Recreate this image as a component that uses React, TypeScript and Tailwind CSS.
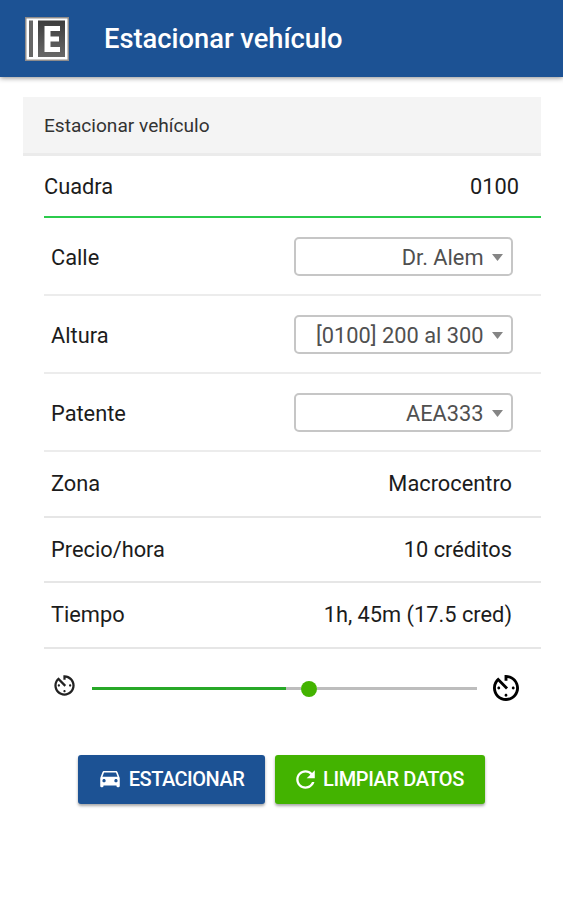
import React from "react";
import { IoMdTimer, IoMdCar, IoMdRefresh } from "react-icons/io";

function Logo() {
  return (
    <svg width="44" height="44" viewBox="0 0 44 44" className="shrink-0">
      <defs>
        <linearGradient id="plate" x1="0" y1="0" x2="0" y2="1">
          <stop offset="0" stopColor="#3c3c3c" />
          <stop offset="1" stopColor="#686868" />
        </linearGradient>
      </defs>
      <rect width="44" height="44" fill="#8f8c8b" />
      <rect x="1.5" y="1.5" width="41" height="41" fill="#fff" />
      <rect x="4" y="3.5" width="4" height="36.500" fill="#666" />
      <rect x="13" y="3.5" width="27" height="36.500" fill="url(#plate)" />
      <path d="M19.500 9H35v5H25.500v5.500H34v5h-8.500V30H35v5H19.500z" fill="#fff" />
    </svg>
  );
}

function SelectRow({ label, value }: { label: string; value: string }) {
  return (
    <div className="flex h-[78px] items-center justify-between border-b-2 border-[#ececec] pt-px pr-[28.500px] pl-[7px]">
      <span className="pt-[3px]">{label}</span>
      <div className="flex h-[39px] w-[219px] items-center justify-end rounded-[5px] border-2 border-[#c6c6c6] pr-2 text-[#505050]">
        <span className="pt-[3px]">{value}</span>
        <svg width="11" height="7" viewBox="0 0 11 7" className="mt-px ml-2">
          <path d="M0 0h11L5.500 7z" fill="#858585" />
        </svg>
      </div>
    </div>
  );
}

function InfoRow({ label, value }: { label: string; value: string }) {
  return (
    <div className="flex h-[65.500px] items-center justify-between border-b-2 border-[#e6e6e6] pt-0.5 pr-[29px] pl-[7px]">
      <span>{label}</span>
      <span>{value}</span>
    </div>
  );
}

export default function App() {
  return (
    <div className="h-[900px] w-full overflow-hidden bg-white font-[Roboto,sans-serif] text-[21.800px] text-[#1c1c1c]">
      <header className="flex h-[77px] items-center bg-[#1c5294] pl-[25px] shadow-[0_1px_5px_rgba(0,0,0,0.45)]">
        <Logo />
        <h1 className="mt-0.5 ml-[35px] text-[27.300px] font-medium text-white">Estacionar vehículo</h1>
      </header>
      <main className="mt-5 mr-[22px] ml-[23px]">
        <div className="flex h-[59px] items-center border-b-3 border-[#ebebeb] bg-[#f4f4f4] pt-0.5 pl-[21px] text-[19.100px] text-[#333]">
          Estacionar vehículo
        </div>
        <div className="ml-[21px]">
          <div className="flex h-[62px] items-center justify-between border-b-2 border-[#2bcb4c] pt-0.5 pr-[22px]">
            <span>Cuadra</span>
            <span>0100</span>
          </div>
          <SelectRow label="Calle" value="Dr. Alem" />
          <SelectRow label="Altura" value="[0100] 200 al 300" />
          <SelectRow label="Patente" value="AEA333" />
          <InfoRow label="Zona" value="Macrocentro" />
          <InfoRow label="Precio/hora" value="10 créditos" />
          <InfoRow label="Tiempo" value="1h, 45m (17.5 cred)" />
        </div>
        <div className="mt-[25px] flex h-[28px] items-center pl-[29px]">
          <IoMdTimer className="mb-1 size-[25px] shrink-0 text-[#222]" />
          <div className="mt-0.5 ml-[15px] flex w-[385px] items-center">
            <div className="h-[3px] w-[194px] bg-[#27a827]" />
            <div className="h-[3px] w-[15px] bg-[#bdbdbd]" />
            <div className="size-4 rounded-full bg-[#43b300]" />
            <div className="h-[3px] grow bg-[#bdbdbd]" />
          </div>
          <IoMdTimer className="ml-[13px] size-[32px] shrink-0 text-black" />
        </div>
        <div className="mt-[53px] ml-[55px] flex gap-[10px] text-[20px] font-medium text-white">
          <button className="flex h-[49px] w-[187px] items-center justify-center rounded-[3px] bg-[#1c5294] pr-0.5 tracking-[-0.5px] shadow-[0_2px_3px_rgba(0,0,0,0.35)]">
            <IoMdCar className="mr-1.5 size-[26px]" />
            ESTACIONAR
          </button>
          <button className="flex h-[49px] w-[210px] items-center justify-center rounded-[3px] bg-[#43b300] pr-1 tracking-[-0.4px] shadow-[0_2px_3px_rgba(0,0,0,0.35)]">
            <IoMdRefresh className="mr-1 size-[27px]" />
            LIMPIAR DATOS
          </button>
        </div>
      </main>
    </div>
  );
}
